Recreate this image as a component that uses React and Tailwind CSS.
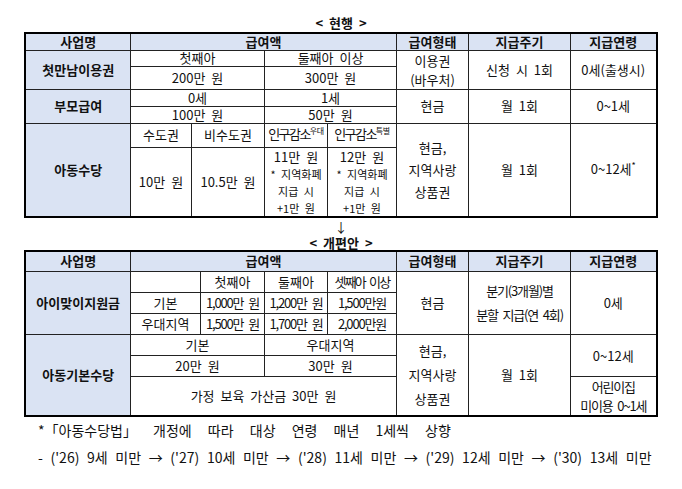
import React from "react";

const F = { fontFamily: '"Noto Sans CJK KR", "Noto Sans", sans-serif' };

const td = "border border-[#222] text-center align-middle p-0 leading-[14px] text-[13px] text-[#111]";
const th = "border border-[#222] text-center align-middle p-0 leading-[14px] text-[13px] font-bold bg-[#dae3f3] text-[#111]";
const name = "border border-[#222] text-center align-middle p-0 leading-[14px] text-[13px] font-bold bg-[#dae3f3] text-[#111]";
const tight = "tracking-[-0.09em]";

function Sup({ children }) {
  return (
    <span className="tracking-[-0.12em] whitespace-nowrap">
      인구감소
      <span className="text-[8px] tracking-[-0.05em] relative top-[-5px]">{children}</span>
    </span>
  );
}

function Extra({ amount }) {
  return (
    <div className="flex flex-col items-center">
      <div className="leading-[18px] text-[13px]">{amount}</div>
      <div className="leading-[17px] text-[11px]">* 지역화폐</div>
      <div className="leading-[17px] text-[11px]">지급 시</div>
      <div className="leading-[16px] text-[11px]">+1만 원</div>
    </div>
  );
}

export default function App() {
  return (
    <div className="w-[682px] h-[489px] bg-white [word-spacing:3px]" style={F}>
      <div className="pt-[14px] h-[32px] text-center font-bold text-[13px] leading-[17px] text-[#111]">
        &lt; 현행 &gt;
      </div>
      <table className="mx-auto w-[631px] table-fixed border-collapse border-2 border-black">
        <colgroup>
          <col className="w-[105px]" />
          <col className="w-[61px]" />
          <col className="w-[73px]" />
          <col className="w-[63px]" />
          <col className="w-[69px]" />
          <col className="w-[72px]" />
          <col className="w-[102px]" />
          <col className="w-[86px]" />
        </colgroup>
        <tbody>
          <tr className="h-[17px]">
            <td className={th}>사업명</td>
            <td className={th} colSpan={4}>급여액</td>
            <td className={th}>급여형태</td>
            <td className={th}>지급주기</td>
            <td className={th}>지급연령</td>
          </tr>
          <tr className="h-[16px]">
            <td className={name} rowSpan={2}>첫만남이용권</td>
            <td className={td} colSpan={2}>첫째아</td>
            <td className={td} colSpan={2}>둘째아 이상</td>
            <td className={td + " leading-[19px]"} rowSpan={2}>이용권<br />(바우처)</td>
            <td className={td} rowSpan={2}>신청 시 1회</td>
            <td className={td} rowSpan={2}>0세(출생시)</td>
          </tr>
          <tr className="h-[22px]">
            <td className={td} colSpan={2}>200만 원</td>
            <td className={td} colSpan={2}>300만 원</td>
          </tr>
          <tr className="h-[17px]">
            <td className={name} rowSpan={2}>부모급여</td>
            <td className={td} colSpan={2}>0세</td>
            <td className={td} colSpan={2}>1세</td>
            <td className={td} rowSpan={2}>현금</td>
            <td className={td} rowSpan={2}>월 1회</td>
            <td className={td} rowSpan={2}>0~1세</td>
          </tr>
          <tr className="h-[17px]">
            <td className={td} colSpan={2}>100만 원</td>
            <td className={td} colSpan={2}>50만 원</td>
          </tr>
          <tr className="h-[24px]">
            <td className={name} rowSpan={2}>아동수당</td>
            <td className={td}>수도권</td>
            <td className={td}>비수도권</td>
            <td className={td}><Sup>우대</Sup></td>
            <td className={td}><Sup>특별</Sup></td>
            <td className={td + " leading-[22px]"} rowSpan={2}>현금,<br />지역사랑<br />상품권</td>
            <td className={td} rowSpan={2}>월 1회</td>
            <td className={td} rowSpan={2}>
              0~12세<span className="text-[9px] relative top-[-5px]">*</span>
            </td>
          </tr>
          <tr className="h-[68px]">
            <td className={td}>10만 원</td>
            <td className={td}>10.5만 원</td>
            <td className={td}><Extra amount="11만 원" /></td>
            <td className={td}><Extra amount="12만 원" /></td>
          </tr>
        </tbody>
      </table>

      <div className="h-[17px] pt-[1px] text-center text-[13px] leading-[16px] text-[#111]">↓</div>
      <div className="h-[15px] text-center font-bold text-[13px] leading-[15px] text-[#111]">
        &lt; 개편안 &gt;
      </div>

      <table className="mx-auto w-[631px] table-fixed border-collapse border-2 border-black">
        <colgroup>
          <col className="w-[105px]" />
          <col className="w-[70px]" />
          <col className="w-[64px]" />
          <col className="w-[63px]" />
          <col className="w-[69px]" />
          <col className="w-[72px]" />
          <col className="w-[102px]" />
          <col className="w-[86px]" />
        </colgroup>
        <tbody>
          <tr className="h-[21px]">
            <td className={th}>사업명</td>
            <td className={th} colSpan={4}>급여액</td>
            <td className={th}>급여형태</td>
            <td className={th}>지급주기</td>
            <td className={th}>지급연령</td>
          </tr>
          <tr className="h-[21px]">
            <td className={name} rowSpan={3}>아이맞이지원금</td>
            <td className={td}></td>
            <td className={td}>첫째아</td>
            <td className={td}>둘째아</td>
            <td className={td}><span className="tracking-[-0.14em]">셋째아 이상</span></td>
            <td className={td} rowSpan={3}>현금</td>
            <td className={td + " leading-[24px]"} rowSpan={3}>
              <span className={tight}>분기(3개월)별</span>
              <br />
              <span className={tight}>분할 지급(연 4회)</span>
            </td>
            <td className={td} rowSpan={3}>0세</td>
          </tr>
          <tr className="h-[21px]">
            <td className={td}>기본</td>
            <td className={td}><span className={tight}>1,000만 원</span></td>
            <td className={td}><span className={tight}>1,200만 원</span></td>
            <td className={td}><span className={tight}>1,500만원</span></td>
          </tr>
          <tr className="h-[21px]">
            <td className={td}>우대지역</td>
            <td className={td}><span className={tight}>1,500만 원</span></td>
            <td className={td}><span className={tight}>1,700만 원</span></td>
            <td className={td}><span className={tight}>2,000만원</span></td>
          </tr>
          <tr className="h-[21px]">
            <td className={name} rowSpan={3}>아동기본수당</td>
            <td className={td} colSpan={2}>기본</td>
            <td className={td} colSpan={2}>우대지역</td>
            <td className={td + " leading-[24px]"} rowSpan={3}>현금,<br />지역사랑<br />상품권</td>
            <td className={td} rowSpan={3}>월 1회</td>
            <td className={td} rowSpan={2}>0~12세</td>
          </tr>
          <tr className="h-[21px]">
            <td className={td} colSpan={2}>20만 원</td>
            <td className={td} colSpan={2}>30만 원</td>
          </tr>
          <tr className="h-[38px]">
            <td className={td} colSpan={4}>가정 보육 가산금 30만 원</td>
            <td className={td + " leading-[19px]"}>
              <span className={tight}>어린이집</span>
              <br />
              <span className={tight}>미이용 0~1세</span>
            </td>
          </tr>
        </tbody>
      </table>

      <div className="pl-[38px] pt-0 text-[14px] leading-[27px] text-[#111]">
        <div className="[word-spacing:13px]">*「아동수당법」 개정에 따라 대상 연령 매년 1세씩 상향</div>
        <div className="[word-spacing:4.5px]">- ('26) 9세 미만 → ('27) 10세 미만 → ('28) 11세 미만 → ('29) 12세 미만 → ('30) 13세 미만</div>
      </div>
    </div>
  );
}
